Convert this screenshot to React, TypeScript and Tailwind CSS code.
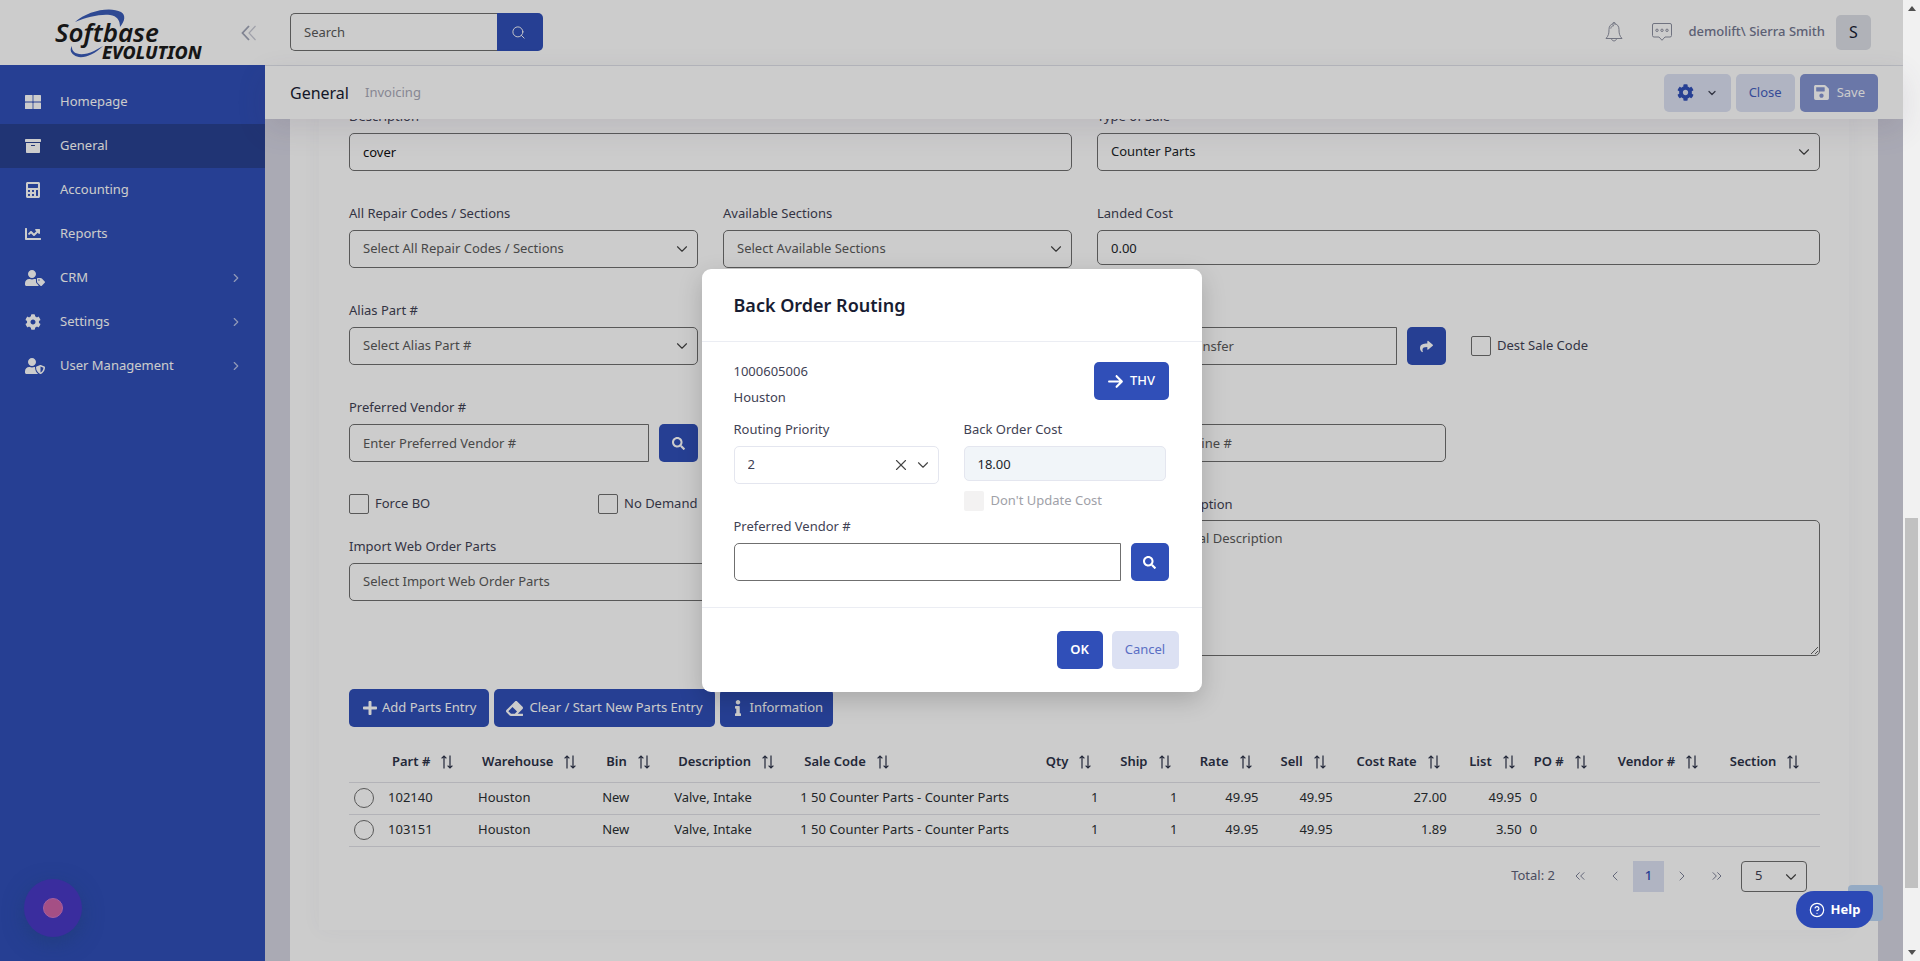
import React, { useState } from 'react';
import {
  FaArchive,
  FaCalculator,
  FaChartLine,
  FaCog,
  FaEraser,
  FaInfo,
  FaPlus,
  FaSave,
  FaSearch,
  FaShare,
  FaUserShield,
  FaUserTag,
} from 'react-icons/fa';
import { FaArrowRight } from 'react-icons/fa6';
import {
  ChevronDown,
  ChevronLeft,
  ChevronRight,
  ChevronsLeft,
  ChevronsRight,
  CircleHelp,
  Search,
  X,
} from 'lucide-react';
import clsx from 'clsx';

const TilesIcon = () => (
  <svg width="16" height="14" viewBox="0 0 16 14" fill="currentColor">
    <rect x="0" y="0" width="7.6" height="6.6" rx="0.6" />
    <rect x="8.4" y="0" width="7.6" height="6.6" rx="0.6" />
    <rect x="0" y="7.4" width="7.6" height="6.6" rx="0.6" />
    <rect x="8.4" y="7.4" width="7.6" height="6.6" rx="0.6" />
  </svg>
);

const menu = [
  { label: 'Homepage', icon: <TilesIcon /> },
  { label: 'General', icon: <FaArchive size={16} />, active: true },
  { label: 'Accounting', icon: <FaCalculator size={16} /> },
  { label: 'Reports', icon: <FaChartLine size={16} /> },
  { label: 'CRM', icon: <FaUserTag size={20} />, children: true },
  { label: 'Settings', icon: <FaCog size={16} />, children: true },
  { label: 'User Management', icon: <FaUserShield size={20} />, children: true },
];

const columns = [
  { key: 'part', label: 'Part #', width: 'w-[90px]' },
  { key: 'warehouse', label: 'Warehouse', width: 'w-[124px]' },
  { key: 'bin', label: 'Bin', width: 'w-[72px]' },
  { key: 'description', label: 'Description', width: 'w-[126px]' },
  { key: 'saleCode', label: 'Sale Code', width: 'w-[234px]' },
  { key: 'qty', label: 'Qty', width: 'w-[72px]', numeric: true },
  { key: 'ship', label: 'Ship', width: 'w-[79px]', numeric: true },
  { key: 'rate', label: 'Rate', width: 'w-[81px]', numeric: true },
  { key: 'sell', label: 'Sell', width: 'w-[74px]', numeric: true },
  { key: 'costRate', label: 'Cost Rate', width: 'w-[114px]', numeric: true },
  { key: 'list', label: 'List', width: 'w-[75px]', numeric: true },
  { key: 'po', label: 'PO #', width: 'w-[84px]' },
  { key: 'vendor', label: 'Vendor #', width: 'w-[112px]' },
  { key: 'section', label: 'Section', width: 'w-[98px]' },
];

const rows: Record<string, string>[] = [
  {
    part: '102140', warehouse: 'Houston', bin: 'New', description: 'Valve, Intake',
    saleCode: '1 50 Counter Parts - Counter Parts', qty: '1', ship: '1', rate: '49.95',
    sell: '49.95', costRate: '27.00', list: '49.95', po: '0',
  },
  {
    part: '103151', warehouse: 'Houston', bin: 'New', description: 'Valve, Intake',
    saleCode: '1 50 Counter Parts - Counter Parts', qty: '1', ship: '1', rate: '49.95',
    sell: '49.95', costRate: '1.89', list: '3.50', po: '0',
  },
];

const inputClass =
  'h-[38px] w-full rounded-[5px] border border-[#6f6f6f] bg-white px-[13px] outline-none placeholder:text-[#5a5a5a]';
const primaryButton =
  'flex h-[38px] items-center justify-center rounded-[5px] bg-[#304fb8] text-white';

interface FieldProps {
  id: string;
  label: string;
  className?: string;
  children: React.ReactNode;
}

const Field: React.FC<FieldProps> = ({ id, label, className, children }) => (
  <div className={className}>
    <label htmlFor={id} className="mb-[7px] block leading-5 text-[#3f4254]">{label}</label>
    {children}
  </div>
);

interface SelectBoxProps {
  id: string;
  text: string;
  placeholder?: boolean;
}

const SelectBox: React.FC<SelectBoxProps> = ({ id, text, placeholder }) => (
  <div className="relative">
    <select
      id={id}
      className={clsx(inputClass, 'appearance-none', placeholder ? 'text-[#5a5a5a]' : 'text-[#212529]')}
    >
      <option>{text}</option>
    </select>
    <ChevronDown size={18} strokeWidth={1.5} className="pointer-events-none absolute top-[10px] right-[7px] text-[#444]" />
  </div>
);

const CheckBox: React.FC<{ label: string; className?: string }> = ({ label, className }) => (
  <label className={clsx('flex h-5 items-center gap-[6px] text-[#3f4254]', className)}>
    <input type="checkbox" className="size-5 appearance-none rounded-xs border border-[#6f6f6f] bg-white" />
    {label}
  </label>
);

const SortIcon = () => (
  <svg width="14" height="14" viewBox="0 0 14 14" fill="none" stroke="currentColor" strokeWidth="1.2" className="shrink-0">
    <path d="M4 13.5V1M1.6 3.4L4 1L6.4 3.4" />
    <path d="M10 0.5V13M7.6 10.6L10 13L12.4 10.6" />
  </svg>
);

const Logo = () => (
  <svg width="160" height="56" viewBox="0 0 160 56" className="ml-[50px] shrink-0 overflow-visible">
    <path d="M25 17C37 6 60 1 71 7C76 10 75 16 70 22C70 15 67 11 60 10C50 9 37 12 25 17Z" fill="#3a5cb8" />
    <path d="M22 41C21 49 31 52 44 46L53 41C43 51 30 55 24 50C20 47 20 44 22 41Z" fill="#3a5cb8" />
    <text x="5" y="37" fontFamily="Noto Sans, sans-serif" fontSize="26" fontStyle="italic" fontWeight="600" fill="#1c1c1c">
      Softbase
    </text>
    <text x="52" y="54" fontFamily="Noto Sans, sans-serif" fontSize="18" fontStyle="italic" fontWeight="800" fill="#1c1c1c">
      EVOLUTION
    </text>
  </svg>
);

const Sidebar = () => (
  <aside className="flex w-[265px] shrink-0 flex-col bg-[#304fb8]">
    <div className="flex h-[65px] items-center justify-between bg-white pr-2">
      <Logo />
      <button aria-label="Collapse menu" className="text-[#a1a5b7]">
        <svg width="16" height="16" viewBox="0 0 16 16" fill="none" stroke="currentColor" strokeWidth="1.8">
          <path d="M8 1L1.5 8L8 15" />
          <path d="M14.5 1L8 8L14.5 15" strokeWidth="1.2" opacity="0.6" />
        </svg>
      </button>
    </div>
    <nav className="pt-[15px]">
      {menu.map((item) => (
        <a
          key={item.label}
          href="#"
          className={clsx('flex h-11 items-center pr-[22px] pl-[25px] text-white', item.active && 'bg-[#294191]')}
        >
          <span className="w-[35px]">{item.icon}</span>
          <span className="flex-1">{item.label}</span>
          {item.children && <ChevronRight size={14} className="text-[#b5c0e6]" />}
        </a>
      ))}
    </nav>
  </aside>
);

const Header = () => (
  <header className="flex h-[66px] shrink-0 items-center border-b border-[#e3e5ec] bg-white pr-8 pb-px pl-[25px]">
    <div className="flex w-[253px]">
      <input
        aria-label="Search"
        placeholder="Search"
        className="h-[38px] min-w-0 flex-1 rounded-l-[5px] border border-r-0 border-[#6f6f6f] bg-white px-[13px] outline-none placeholder:text-[#5a5a5a]"
      />
      <button aria-label="Run search" className="flex h-[38px] w-[46px] items-center justify-center rounded-r-[5px] bg-[#304fb8] pr-1 text-white">
        <Search size={15} strokeWidth={1.5} />
      </button>
    </div>
    <div className="ml-auto flex items-center">
      <button aria-label="Notifications" className="mr-[29px] text-[#8d90a0]">
        <svg width="18" height="20" viewBox="0 0 18 20" fill="none" stroke="currentColor" strokeWidth="1">
          <path d="M9 1.8C5.6 1.8 4 4.4 4 7.4C4 11.5 3.6 13.6 1 16.5H17C14.4 13.6 14 11.5 14 7.4C14 4.4 12.4 1.8 9 1.8Z" />
          <path d="M7.5 1.6C7.5 0.2 10.5 0.2 10.5 1.6M6.5 16.8C7 19.6 11 19.6 11.5 16.8M9 3.6C7.2 3.6 6 4.8 5.8 6.6" />
        </svg>
      </button>
      <button aria-label="Messages" className="mr-4 text-[#8d90a0]">
        <svg width="20" height="18" viewBox="0 0 20 18" fill="none" stroke="currentColor" strokeWidth="1">
          <path d="M2 0.5H18Q19.5 0.5 19.5 2V12.5Q19.5 14 18 14H13L10 17.3L7 14H2Q0.5 14 0.5 12.5V2Q0.5 0.5 2 0.5Z" />
          <circle cx="5" cy="7.3" r="1.2" />
          <circle cx="10" cy="7.3" r="1.2" />
          <circle cx="15" cy="7.3" r="1.2" />
        </svg>
      </button>
      <span className="font-medium text-[#747891]">demolift\ Sierra Smith</span>
      <span className="ml-[11px] flex size-[35px] items-center justify-center rounded-[5px] bg-[#dcdfe6] text-base text-[#181c32]">S</span>
    </div>
  </header>
);

const SubHeader = () => (
  <div className="relative z-10 flex h-[53px] shrink-0 items-center bg-white px-[25px] shadow-[0_10px_30px_0_rgba(82,63,105,0.12)]">
    <h1 className="text-base text-[#181c32]">General</h1>
    <span className="ml-4 text-[#a9a9b8]">Invoicing</span>
    <div className="ml-auto flex gap-[5px]">
      <button aria-label="Options" className="flex h-[38px] w-[67px] items-center justify-center gap-3 rounded-[5px] bg-[#dce1f3] text-[#304fb8]">
        <FaCog size={17} />
        <ChevronDown size={12} strokeWidth={2.5} className="text-[#3f4254]" />
      </button>
      <button className="h-[38px] rounded-[5px] bg-[#dce1f3] px-[13px] text-[#4460be]">Close</button>
      <button className="flex h-[38px] items-center gap-[7px] rounded-[5px] bg-[#8595d3] px-[13px] text-white">
        <FaSave size={17} />
        Save
      </button>
    </div>
  </div>
);

const PartsForm = () => {
  const [description, setDescription] = useState('cover');
  const [landedCost, setLandedCost] = useState('0.00');

  return (
    <div className="grid grid-cols-2 gap-x-[25px]">
      <div className="flex flex-col gap-8">
        <Field id="description" label="Description">
          <input id="description" value={description} onChange={(e) => setDescription(e.target.value)} className={clsx(inputClass, 'text-[#111]')} />
        </Field>
        <div className="grid grid-cols-2 gap-x-[25px]">
          <Field id="repair-codes" label="All Repair Codes / Sections">
            <SelectBox id="repair-codes" text="Select All Repair Codes / Sections" placeholder />
          </Field>
          <Field id="sections" label="Available Sections">
            <SelectBox id="sections" text="Select Available Sections" placeholder />
          </Field>
        </div>
        <div className="grid grid-cols-2 gap-x-[25px]">
          <Field id="alias" label="Alias Part #">
            <SelectBox id="alias" text="Select Alias Part #" placeholder />
          </Field>
        </div>
        <div className="grid grid-cols-2 gap-x-[25px]">
          <Field id="vendor" label="Preferred Vendor #">
            <div className="flex gap-[10px]">
              <input id="vendor" placeholder="Enter Preferred Vendor #" className={clsx(inputClass, 'min-w-0 flex-1 rounded-r-none')} />
              <button aria-label="Find vendor" className={clsx(primaryButton, 'w-[39px]')}>
                <FaSearch size={13} />
              </button>
            </div>
          </Field>
        </div>
        <div className="flex flex-col gap-[22px]">
          <div className="grid grid-cols-3">
            <CheckBox label="Force BO" />
            <CheckBox label="No Demand" className="pl-2" />
          </div>
          <Field id="web-order" label="Import Web Order Parts">
            <SelectBox id="web-order" text="Select Import Web Order Parts" placeholder />
          </Field>
        </div>
      </div>

      <div className="flex flex-col gap-8">
        <Field id="sale-type" label="Type of Sale">
          <SelectBox id="sale-type" text="Counter Parts" />
        </Field>
        <Field id="landed-cost" label="Landed Cost" className="h-[65px]">
          <input
            id="landed-cost"
            value={landedCost}
            onChange={(e) => setLandedCost(e.target.value)}
            className="block h-[35px] w-full rounded-[5px] border border-[#6f6f6f] bg-white px-[13px] text-[#212529] outline-none"
          />
        </Field>
        <div className="flex items-end">
          <Field id="transfer" label="Transfer" className="w-[300px]">
            <input id="transfer" placeholder="Warehouse Transfer" className={clsx(inputClass, 'rounded-r-none')} />
          </Field>
          <button aria-label="Transfer part" className={clsx(primaryButton, 'ml-[10px] w-[39px]')}>
            <FaShare size={13} />
          </button>
          <CheckBox label="Dest Sale Code" className="mb-[9px] ml-[25px]" />
        </div>
        <Field id="line" label="Line #" className="w-[349px]">
          <input id="line" placeholder="Enter Vendor Line #" className={inputClass} />
        </Field>
        <div>
          <label htmlFor="additional" className="mb-[6px] block leading-5 text-[#3f4254]">Additional Description</label>
          <textarea
            id="additional"
            placeholder="Enter Additional Description"
            className="block h-[136px] w-full rounded-[5px] border border-[#6f6f6f] bg-white px-[13px] py-2 outline-none placeholder:text-[#5a5a5a]"
          />
        </div>
      </div>
    </div>
  );
};

const PartsTable = () => (
  <table className="w-full table-fixed border-collapse">
    <colgroup>
      <col className="w-[35px]" />
      {columns.map((c) => <col key={c.key} className={c.width} />)}
    </colgroup>
    <thead>
      <tr className="h-10 border-b border-[#e0e0e6]">
        <th aria-label="Select" />
        {columns.map((c) => (
          <th key={c.key} className="pr-[10px] pl-2 font-semibold whitespace-nowrap text-[#2c3248]">
            <span className={clsx('flex items-center gap-[10px]', c.numeric && 'justify-end')}>
              {c.label} <SortIcon />
            </span>
          </th>
        ))}
      </tr>
    </thead>
    <tbody>
      {rows.map((row) => (
        <tr key={row.part} className="h-8 border-b border-[#e0e0e6]">
          <td className="pl-[5px]">
            <input type="radio" name="part" aria-label={row.part} className="block size-5 appearance-none rounded-full border border-[#6f6f6f] bg-white" />
          </td>
          {columns.map((c) => (
            <td key={c.key} className={clsx('px-1 whitespace-nowrap text-[#2b2f33]', c.numeric && 'text-right')}>
              {row[c.key]}
            </td>
          ))}
        </tr>
      ))}
    </tbody>
  </table>
);

const Paginator = () => (
  <div className="mt-[14px] mr-[13px] flex h-[31px] items-center justify-end text-[#7e8299]">
    <span className="mr-[17px] text-[#5e6278]">Total: 2</span>
    <button aria-label="First page" className="mr-[19px]"><ChevronsLeft size={16} strokeWidth={1.5} /></button>
    <button aria-label="Previous page" className="mr-[10px]"><ChevronLeft size={16} strokeWidth={1.5} /></button>
    <button className="h-[31px] w-[31px] bg-[#dce1f3] font-medium text-[#304fb8]">1</button>
    <button aria-label="Next page" className="ml-[10px]"><ChevronRight size={16} strokeWidth={1.5} /></button>
    <button aria-label="Last page" className="ml-[19px]"><ChevronsRight size={16} strokeWidth={1.5} /></button>
    <div className="relative ml-4">
      <select aria-label="Rows per page" className="h-[31px] w-[66px] appearance-none rounded-[4px] border border-[#6f6f6f] bg-white px-[13px] text-[#3f4254]">
        <option>5</option>
      </select>
      <ChevronDown size={18} strokeWidth={1.5} className="pointer-events-none absolute top-[7px] right-[7px] text-[#444]" />
    </div>
  </div>
);

const BackOrderModal = () => {
  const [vendor, setVendor] = useState('');

  return (
    <div role="dialog" aria-label="Back Order Routing" className="w-[500px] rounded-[9px] bg-white shadow-[0_8px_24px_rgba(0,0,0,0.18)]">
      <div className="flex h-[73px] items-center border-b border-[#ebedf3] px-8">
        <h2 className="text-lg font-semibold text-[#181c32]">Back Order Routing</h2>
      </div>
      <div className="h-[265px] pt-5 pr-[33px] pl-8">
        <div className="flex items-start justify-between text-[#3f4254]">
          <div className="leading-[26px]">
            <p className="-mt-1">1000605006</p>
            <p>Houston</p>
          </div>
          <button className={clsx(primaryButton, 'w-[75px] gap-[6px] font-medium')}>
            <FaArrowRight size={17} />
            THV
          </button>
        </div>
        <div className="mt-[9px] grid grid-cols-[205px_202px] gap-x-[25px]">
          <Field id="priority" label="Routing Priority">
            <div className="relative">
              <select id="priority" className="h-[38px] w-full appearance-none rounded-[5px] border border-[#e4e6ef] bg-white px-[13px] text-[#3f4254]">
                <option>2</option>
              </select>
              <button aria-label="Clear priority" className="absolute top-[10px] right-[29px] text-[#444]">
                <X size={18} strokeWidth={1.5} />
              </button>
              <ChevronDown size={18} strokeWidth={1.5} className="pointer-events-none absolute top-[10px] right-[7px] text-[#444]" />
            </div>
          </Field>
          <div>
            <Field id="cost" label="Back Order Cost">
              <input
                id="cost"
                readOnly
                value="18.00"
                className="block h-[35px] w-full rounded-[5px] border border-[#e4e6ef] bg-[#f1f5f9] px-[13px] text-[#212529] outline-none"
              />
            </Field>
            <label className="mt-[10px] flex h-5 items-center gap-[7px] text-[#a0a1a8]">
              <input type="checkbox" disabled className="size-5 appearance-none rounded-xs bg-[#f3f2f2]" />
              Don't Update Cost
            </label>
          </div>
        </div>
        <Field id="modal-vendor" label="Preferred Vendor #" className="mt-[5px]">
          <div className="flex gap-[10px]">
            <input id="modal-vendor" value={vendor} onChange={(e) => setVendor(e.target.value)} className={clsx(inputClass, 'min-w-0 flex-1 rounded-r-none')} />
            <button aria-label="Find vendor" className={clsx(primaryButton, 'w-[38px]')}>
              <FaSearch size={13} />
            </button>
          </div>
        </Field>
      </div>
      <div className="flex h-[85px] justify-end gap-[9px] border-t border-[#ebedf3] pt-[23px] pr-[23px]">
        <button className={clsx(primaryButton, 'w-[46px] font-semibold')}>OK</button>
        <button className="h-[38px] w-[67px] rounded-[5px] bg-[#dce1f3] text-[#5a6fc4]">Cancel</button>
      </div>
    </div>
  );
};

const ScrollRail = () => (
  <div className="flex w-[17px] shrink-0 flex-col items-center justify-between bg-[#f1f1f1] py-[6px]">
    <svg width="8" height="5" viewBox="0 0 8 5" fill="#505050"><path d="M4 0L8 5H0Z" /></svg>
    <div className="flex w-[13px] flex-1 flex-col py-[6px]">
      <div className="flex-[501]" />
      <div className="flex-[370] bg-[#c1c1c1]" />
      <div className="flex-[56]" />
    </div>
    <svg width="8" height="5" viewBox="0 0 8 5" fill="#505050"><path d="M4 5L8 0H0Z" /></svg>
  </div>
);

export default function App() {
  return (
    <div className="flex h-screen overflow-hidden font-['Noto_Sans',sans-serif] text-[13px] text-[#3f4254]">
      <div className="relative flex min-w-0 flex-1">
        <Sidebar />
        <div className="flex min-w-0 flex-1 flex-col">
          <Header />
          <SubHeader />
          <main className="flex min-h-0 flex-1 overflow-hidden bg-[#d5d5e2] px-[25px]">
            <div className="min-w-0 flex-1 bg-white px-[29px]">
              <div className="-mt-[13px] pr-[29px] pb-[38px] pl-[30px] shadow-[0_0_20px_0_rgba(76,87,125,0.04)]">
                <PartsForm />
                <div className="mt-[33px] flex gap-[5px]">
                  <button className={clsx(primaryButton, 'gap-1 px-[13px]')}>
                    <FaPlus size={16} /> Add Parts Entry
                  </button>
                  <button className={clsx(primaryButton, 'gap-[6px] px-3')}>
                    <FaEraser size={17} /> Clear / Start New Parts Entry
                  </button>
                  <button className={clsx(primaryButton, 'gap-1 px-[10px]')}>
                    <FaInfo size={16} /> Information
                  </button>
                </div>
                <div className="mt-[15px]">
                  <PartsTable />
                  <Paginator />
                </div>
              </div>
            </div>
          </main>
        </div>

        <div className="absolute inset-0 z-20 flex items-center justify-center bg-black/20">
          <BackOrderModal />
        </div>

        {/* floating widgets */}
        <button aria-label="Record" className="absolute bottom-6 left-6 z-30 flex size-[58px] items-center justify-center rounded-full bg-[#3a2d9e] shadow-[0_6px_20px_rgba(30,60,110,0.5)]">
          <span className="size-5 rounded-full border border-[#a85f9f] bg-[#a54f85]" />
        </button>
        <div className="absolute right-5 bottom-10 z-30 h-9 w-[35px] rounded-[4px] bg-[#94aac4]" />
        <button className="absolute right-[30px] bottom-[33px] z-30 flex h-[37px] w-[77px] items-center justify-center gap-[6px] rounded-l-[18px] rounded-tr-[6px] rounded-br-[18px] bg-[#2c49b6] font-bold text-white">
          <CircleHelp size={16} strokeWidth={1.8} />
          Help
        </button>
      </div>
      <ScrollRail />
    </div>
  );
}
